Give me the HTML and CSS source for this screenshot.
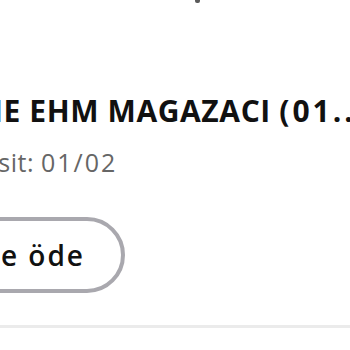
FILE: index.html
```html
<!DOCTYPE html>
<html lang="tr">
<head>
<meta charset="utf-8">
<title>Taksit</title>
<link rel="stylesheet" href="styles.css">
</head>
<body>
<div class="screen">
  <div class="top-row"><span class="tail"></span></div>
  <div class="item">
    <div class="title">ONLINE EHM MAGAZACI <span class="title-num">(01...</span></div>
    <div class="sub">Taksit: <span class="num">01/02</span></div>
    <div class="pay-row">
      <button class="pay" type="button">Tek seferde öde</button>
    </div>
  </div>
  <div class="divider"></div>
</div>
</body>
</html>
```

FILE: styles.css
```css
html, body {
  margin: 0;
  padding: 0;
  background: #ffffff;
}

body {
  width: 350px;
  height: 350px;
  overflow: hidden;
  font-family: "Open Sans", "Noto Sans", sans-serif;
  color: #111111;
}

.screen {
  width: 350px;
  height: 350px;
  overflow: hidden;
  display: flex;
  flex-direction: column;
}

.top-row {
  height: 3px;
  padding-left: 195px;
  display: flex;
}

.tail {
  display: block;
  width: 5px;
  height: 3px;
  background: #5a5a5a;
  border-radius: 0 0 2px 2px;
}

.item {
  padding-top: 90px;
  display: flex;
  flex-direction: column;
}

.title {
  margin-left: -99px;
  font-size: 30px;
  line-height: 36px;
  font-weight: 700;
  letter-spacing: 0.6px;
  white-space: nowrap;
  color: #111111;
}

.title-num {
  letter-spacing: 3px;
}

.sub {
  margin-left: -44px;
  margin-top: 18px;
  font-size: 25px;
  line-height: 30px;
  letter-spacing: 0.5px;
  color: #666666;
  white-space: nowrap;
}

.num {
  letter-spacing: 2px;
}

.pay-row {
  margin-top: 40px;
  width: 125px;
  display: flex;
  justify-content: flex-end;
}

.pay {
  flex: none;
  height: 76px;
  padding: 0 36px 0 38px;
  border: 4px solid #a9a8ae;
  border-radius: 38px;
  background: #ffffff;
  font-family: inherit;
  font-size: 28px;
  font-weight: 600;
  letter-spacing: 2px;
  color: #111111;
  white-space: nowrap;
}

.divider {
  margin-top: 32px;
  height: 3px;
  background: #ebebeb;
}
```
